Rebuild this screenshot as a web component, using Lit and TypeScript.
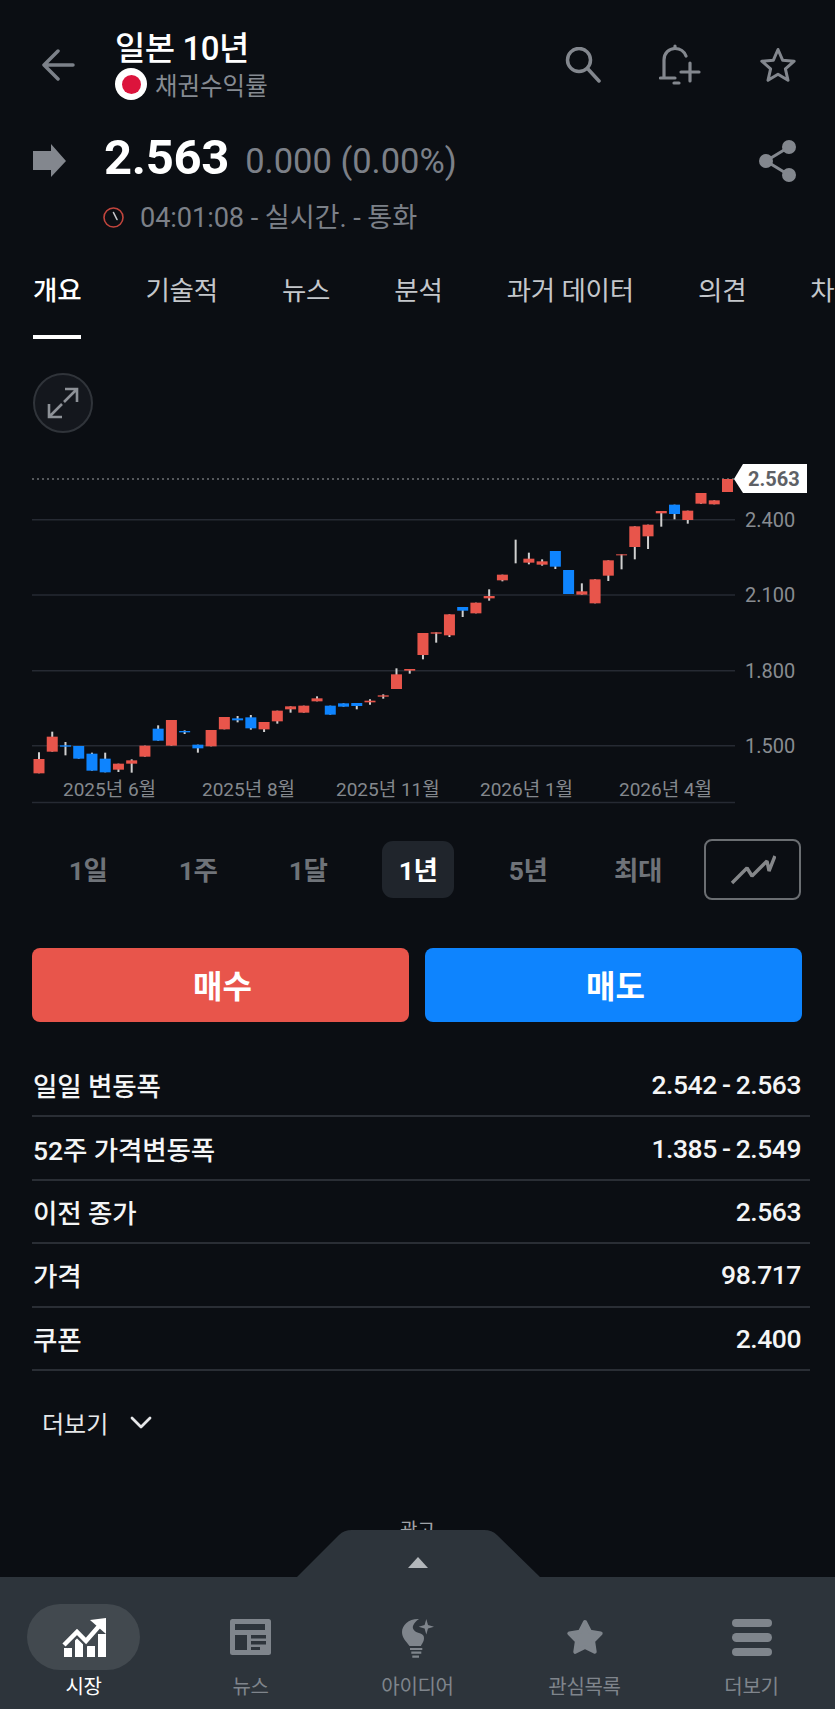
import { LitElement, html, svg, css } from 'lit';
import { customElement } from 'lit/decorators.js';

type Candle = [c: 'r' | 'b' | 'g', top: number, bottom: number, wickTop?: number, wickBottom?: number];

// measured on a 3x grid, relative to the chart's top edge
const CANDLES: Candle[] = [
    ['r', 927, 970, 907, 970], ['r', 860, 905, 845, 905], ['b', 886, 890, 876, 916], ['b', 888, 926],
    ['b', 911, 962, 908, 962], ['b', 926, 967, 908, 967], ['r', 941, 959, 941, 966], ['r', 931, 941, 928, 968],
    ['r', 887, 920], ['b', 836, 872, 826, 872], ['r', 810, 887], ['b', 843, 847, 841, 852],
    ['b', 884, 895, 884, 908], ['r', 840, 889], ['r', 801, 838], ['b', 805, 811, 798, 817],
    ['b', 802, 835, 795, 839], ['r', 816, 838, 816, 846], ['r', 782, 814, 782, 821], ['r', 769, 778, 769, 788],
    ['r', 767, 788], ['r', 745, 754, 739, 754], ['b', 767, 794], ['b', 760, 770],
    ['b', 759, 768, 759, 778], ['r', 752, 757, 748, 764], ['r', 736, 740, 733, 746], ['r', 673, 717, 655, 717],
    ['r', 657, 662, 657, 671], ['r', 549, 615, 549, 628], ['r', 547, 551, 547, 578], ['r', 493, 556, 493, 561],
    ['b', 471, 482, 471, 501], ['r', 458, 490], ['r', 438, 445, 418, 452], ['r', 374, 391, 374, 394],
    ['g', 314, 316, 269, 340], ['r', 326, 338, 308, 343], ['r', 334, 344, 328, 347], ['b', 303, 350, 303, 357],
    ['b', 360, 432], ['r', 424, 434, 400, 434], ['r', 388, 460], ['r', 331, 377, 331, 393],
    ['r', 313, 316, 313, 358], ['r', 229, 291, 229, 328], ['r', 224, 259, 224, 297], ['r', 183, 190, 183, 230],
    ['b', 164, 192, 164, 208], ['r', 182, 210, 182, 221], ['r', 129, 161], ['r', 151, 163], ['r', 87, 126],
];

const COLORS = { r: '#e8554b', b: '#0e84fe', g: '#9a9a9a' };

const TABS = ['개요', '기술적', '뉴스', '분석', '과거 데이터', '의견', '차'];
const RANGES = ['1일', '1주', '1달', '1년', '5년', '최대'];
const STATS = [
    ['일일 변동폭', '2.542 - 2.563'],
    ['52주 가격변동폭', '1.385 - 2.549'],
    ['이전 종가', '2.563'],
    ['가격', '98.717'],
    ['쿠폰', '2.400'],
];

function star(cx: number, cy: number, R: number, r: number) {
    const pts: string[] = [];
    for (let i = 0; i < 10; i++) {
        const a = (Math.PI / 5) * i - Math.PI / 2;
        const d = i % 2 ? r : R;
        pts.push(`${(cx + d * Math.cos(a)).toFixed(1)},${(cy + d * Math.sin(a)).toFixed(1)}`);
    }
    return pts.join(' ');
}

@customElement('app-root')
export class AppRoot extends LitElement {
    static styles = css`
        :host {
            display: flex;
            flex-direction: column;
            height: 1709px;
            background: #0b0e13;
            color: #fff;
            font-family: Roboto, 'Noto Sans CJK KR', sans-serif;
            overflow: hidden;
        }
        svg {
            display: block;
            flex: none;
        }
        .top {
            display: flex;
            align-items: center;
            height: 112px;
            padding: 0 38px 0 42px;
            box-sizing: border-box;
        }
        .back {
            margin-top: 18px;
        }
        .titles {
            margin-left: 39px;
            flex: 1;
            padding-top: 17px;
        }
        .title {
            font-size: 33px;
            line-height: 39px;
            font-weight: 500;
            letter-spacing: -0.5px;
            padding-top: 1px;
            margin-bottom: -1px;
        }
        .sub {
            display: flex;
            align-items: center;
            gap: 8px;
            height: 34px;
            font-size: 24.5px;
            color: #868b92;
        }
        .flag {
            width: 32px;
            height: 32px;
            border-radius: 50%;
            background: #fff;
            display: flex;
            align-items: center;
            justify-content: center;
        }
        .flag i {
            width: 19px;
            height: 19px;
            border-radius: 50%;
            background: #dc143c;
        }
        .top-icons {
            display: flex;
            align-items: center;
            gap: 58px;
            margin-top: 18px;
        }
        .quote {
            display: flex;
            align-items: center;
            height: 62px;
            margin-top: 17px;
            padding: 0 38px 0 33px;
        }
        .price {
            margin-left: 38px;
            padding-bottom: 5px;
            font-size: 49px;
            font-weight: 700;
            letter-spacing: -0.3px;
        }
        .change {
            margin-left: 16px;
            flex: 1;
            font-size: 34.5px;
            color: #7c8088;
            padding-top: 1px;
        }
        .share {
            margin-top: 2px;
        }
        .meta {
            display: flex;
            align-items: center;
            gap: 16px;
            height: 36px;
            margin-top: 8px;
            padding-left: 103px;
            font-size: 27.2px;
            letter-spacing: -0.1px;
            color: #7c8088;
        }
        .meta span {
            padding-bottom: 4px;
        }
        .tabs {
            display: flex;
            height: 73px;
            margin-top: 39px;
            padding-left: 33px;
            gap: 64px;
            white-space: nowrap;
            overflow: hidden;
        }
        .tab {
            font-size: 26.5px;
            line-height: 34px;
            letter-spacing: -0.2px;
            color: #c4c7cb;
        }
        .tab.on {
            color: #fff;
            font-weight: 500;
            height: 61px;
            border-bottom: 4px solid #fff;
        }
        .expand {
            width: 60px;
            height: 60px;
            margin: 26px 0 0 33px;
            box-sizing: border-box;
            border: 2px solid #30343a;
            border-radius: 50%;
            background: #14171d;
            display: flex;
            align-items: center;
            justify-content: center;
        }
        .chart {
            margin-top: 17px;
            font-family: Roboto, 'Noto Sans CJK KR', sans-serif;
        }
        .ranges {
            display: flex;
            align-items: center;
            height: 61px;
            margin-top: 29px;
            padding: 0 34px 0 33px;
        }
        .range {
            width: 110px;
            display: flex;
            justify-content: center;
        }
        .range span {
            width: 72px;
            height: 57px;
            box-sizing: border-box;
            padding-bottom: 3px;
            border-radius: 11px;
            display: flex;
            align-items: center;
            justify-content: center;
            font-size: 26.5px;
            font-weight: 700;
            letter-spacing: -0.5px;
            color: #6f7379;
        }
        .range.on span {
            background: #20252c;
            color: #fff;
        }
        .kind {
            margin-left: auto;
            width: 97px;
            height: 61px;
            box-sizing: border-box;
            border: 2px solid #6b6e72;
            border-radius: 8px;
            display: flex;
            align-items: center;
            justify-content: center;
        }
        .trade {
            display: grid;
            grid-template-columns: 1fr 1fr;
            gap: 16px;
            height: 74px;
            margin-top: 48px;
            padding: 0 33px 0 32px;
        }
        .trade div {
            box-sizing: border-box;
            padding: 0 0 3px 4px;
            border-radius: 8px;
            display: flex;
            align-items: center;
            justify-content: center;
            font-size: 32px;
            font-weight: 700;
        }
        .buy {
            background: #e8554b;
        }
        .sell {
            background: #0e84fe;
        }
        .stats {
            margin: 32px 25px 0 32px;
        }
        .stat {
            display: flex;
            align-items: center;
            justify-content: space-between;
            height: 61.4px;
            padding: 0 9px 0 1px;
            border-bottom: 2px solid #2a2e35;
            font-size: 26.5px;
            font-weight: 500;
            color: #f4f5f6;
        }
        .stat span:first-child {
            letter-spacing: -0.1px;
        }
        .stat span:last-child {
            letter-spacing: -0.45px;
            word-spacing: -1px;
        }
        .more {
            display: flex;
            align-items: center;
            gap: 22px;
            height: 40px;
            margin: 32px 0 0 42px;
            font-size: 24px;
            color: #e6e7e9;
        }
        .ad {
            flex: 1;
            min-height: 0;
            overflow: hidden;
            display: flex;
            justify-content: center;
            font-size: 19px;
            line-height: 24px;
            color: #a0a3a8;
            padding-top: 76px;
        }
        .sheet {
            flex: none;
        }
        .nav {
            display: grid;
            grid-template-columns: repeat(5, 167px);
            height: 132px;
            padding-top: 27px;
            box-sizing: border-box;
            background: #2d343b;
        }
        .item {
            display: flex;
            flex-direction: column;
            align-items: center;
            font-size: 20px;
            color: #7f858c;
        }
        .icon {
            width: 113px;
            height: 66px;
            border-radius: 33px;
            display: flex;
            align-items: center;
            justify-content: center;
        }
        .item.on {
            color: #fff;
        }
        .item.on .icon {
            background: #42494f;
        }
        .label {
            margin-top: 3px;
            line-height: 28px;
            letter-spacing: -0.3px;
        }
    `;

    _chart() {
        const gridY = [519.7, 595, 670.7, 745.7].map((y) => y - 450);
        const axis = ['2.400', '2.100', '1.800', '1.500'];
        const months = [
            [63, '2025년 6월'],
            [202, '2025년 8월'],
            [336, '2025년 11월'],
            [480, '2026년 1월'],
            [619, '2026년 4월'],
        ];
        return html`<svg class="chart" width="835" height="360" viewBox="0 0 835 360">
            <line x1="32" x2="735" y1="29" y2="29" stroke="#6f7276" stroke-width="1.5" stroke-dasharray="2 3"></line>
            ${gridY.map(
                (y, i) => svg`
                <line x1="32" x2="735" y1=${y} y2=${y} stroke="#262a33" stroke-width="1.5"></line>
                <text x="745" y=${y + 7} font-size="20" fill="#888c91">${axis[i]}</text>`
            )}
            <line x1="32" x2="735" y1="352.5" y2="352.5" stroke="#262a33" stroke-width="1.5"></line>
            ${months.map(
                ([x, t]) => svg`<text x=${x} y="346" font-size="19" fill="#84888d">${t}</text>`
            )}
            ${CANDLES.map(([c, top, bottom, wt, wb], i) => {
                const x = (117 + i * 39.72) / 3;
                return svg`
                <line x1=${x} x2=${x} y1=${(wt ?? top) / 3} y2=${(wb ?? bottom) / 3} stroke="#d0d0d0" stroke-width="2"></line>
                <rect x=${x - 5.5} y=${top / 3} width=${c === 'g' ? 0 : 11} height=${(bottom - top) / 3} fill=${COLORS[c]}></rect>`;
            })}
            <polygon points="734,29 743,14 807,14 807,43 743,43" fill="#fff"></polygon>
            <text x="748" y="36" font-size="20" font-weight="700" fill="#5e6166">2.563</text>
        </svg>`;
    }

    render() {
        return html`
            <div class="top">
                <svg class="back" width="34" height="34" viewBox="0 0 34 34" fill="none" stroke="#7c8189" stroke-width="3.5" stroke-linecap="round" stroke-linejoin="round">
                    <path d="M31 17H3M16 3 2 17l14 14"></path>
                </svg>
                <div class="titles">
                    <div class="title">일본 10년</div>
                    <div class="sub"><span class="flag"><i></i></span>채권수익률</div>
                </div>
                <div class="top-icons">
                    <svg width="36" height="36" viewBox="0 0 36 36" fill="none" stroke="#83878e" stroke-width="3.5" stroke-linecap="round">
                        <circle cx="14" cy="13" r="11.5"></circle>
                        <path d="M22.5 21.5 34 34"></path>
                    </svg>
                    <svg width="42" height="42" viewBox="0 0 42 42" fill="none" stroke="#83878e" stroke-width="3.2" stroke-linecap="round">
                        <path d="M1.5 34H16M5 33V16C5 9 10 4.5 16 4.5c5 0 9 2.5 11 7.500"></path>
                        <path d="M16 2v2M15 39h5M22 28h18M31 19v18"></path>
                    </svg>
                    <svg width="38" height="36" viewBox="0 0 38 36" fill="none" stroke="#83878e" stroke-width="3" stroke-linejoin="round">
                        <polygon points=${star(19, 19.500, 17, 7.800)}></polygon>
                    </svg>
                </div>
            </div>

            <div class="quote">
                <svg width="33" height="33" viewBox="0 0 33 33"><polygon points="0,7 18,7 18,0 33,17 18,33 18,26 0,26" fill="#83878e"></polygon></svg>
                <div class="price">2.563</div>
                <div class="change">0.000 (0.00%)</div>
                <svg class="share" width="38" height="42" viewBox="0 0 38 42" fill="#83878e" stroke="#83878e" stroke-width="3">
                    <path d="M30 7 7 21l23 14" fill="none"></path>
                    <circle cx="30" cy="7" r="5.500"></circle>
                    <circle cx="7" cy="21" r="5.500"></circle>
                    <circle cx="30" cy="35" r="5.500"></circle>
                </svg>
            </div>

            <div class="meta">
                <svg width="21" height="21" viewBox="0 0 21 21" fill="none" stroke-linecap="round">
                    <circle cx="10.500" cy="10.500" r="9.500" stroke="#c2453d" stroke-width="1.600"></circle>
                    <path d="M10.500 5.500 14 12.500" stroke="#c9cbce" stroke-width="1.600"></path>
                </svg>
                <span>04:01:08 - 실시간. - 통화</span>
            </div>

            <div class="tabs">
                ${TABS.map((t, i) => html`<div class="tab ${i === 0 ? 'on' : ''}">${t}</div>`)}
            </div>

            <div class="expand">
                <svg width="32" height="32" viewBox="0 0 32 32" fill="none" stroke="#8d9197" stroke-width="2.600">
                    <path d="M17 15 30 2M18 2h12v13M15 17 2 30M2 17v13h13"></path>
                </svg>
            </div>

            ${this._chart()}

            <div class="ranges">
                ${RANGES.map((r, i) => html`<div class="range ${i === 3 ? 'on' : ''}"><span>${r}</span></div>`)}
                <div class="kind">
                    <svg width="46" height="30" viewBox="0 0 46 30" fill="none" stroke="#85878a" stroke-width="3.400" stroke-linejoin="bevel">
                        <path d="M2 28 17 13l5 8 15-15 2 10 6-15"></path>
                    </svg>
                </div>
            </div>

            <div class="trade">
                <div class="buy">매수</div>
                <div class="sell">매도</div>
            </div>

            <div class="stats">
                ${STATS.map(([k, v]) => html`<div class="stat"><span>${k}</span><span>${v}</span></div>`)}
            </div>

            <div class="more">
                <span>더보기</span>
                <svg width="22" height="13" viewBox="0 0 22 13" fill="none" stroke="#e6e7e9" stroke-width="2.800" stroke-linecap="round" stroke-linejoin="round">
                    <path d="M2 2 11 11 20 2"></path>
                </svg>
            </div>

            <div class="ad"><span>광고</span></div>

            <div class="sheet">
                <svg width="835" height="47" viewBox="0 0 835 47">
                    <path d="M297 47 339 5Q344 0 352 0H484Q492 0 497 5L540 47Z" fill="#2d343b"></path>
                    <polygon points="418,27 428,38 408,38" fill="#b3b7bb"></polygon>
                </svg>
                <div class="nav">
                    <div class="item on">
                        <div class="icon">
                            <svg width="44" height="39" viewBox="0 0 44 39">
                                <path d="M2 39v-9h8v9ZM13 39V20h8v19ZM25 39V28h8v11ZM36 39V16h8v23Z" fill="#fff"></path>
                                <path d="M2 27 15 14l9 9L40 5" fill="none" stroke="#42494f" stroke-width="9"></path>
                                <path d="M2 27 15 14l9 9L38 7" fill="none" stroke="#fff" stroke-width="4.500"></path>
                                <polygon points="28,2 44,0 44,16" fill="#fff"></polygon>
                            </svg>
                        </div>
                        <span class="label">시장</span>
                    </div>
                    <div class="item">
                        <div class="icon">
                            <svg width="41" height="36" viewBox="0 0 41 36">
                                <rect width="41" height="36" rx="2.500" fill="#7f858c"></rect>
                                <path d="M5 5h30v6H5ZM5 16h12v15H5ZM21 16h15v3.500H21ZM21 22h15v3.500H21ZM21 28h9v3H21Z" fill="#2d343b"></path>
                            </svg>
                        </div>
                        <span class="label">뉴스</span>
                    </div>
                    <div class="item">
                        <div class="icon">
                            <svg width="34" height="41" viewBox="0 0 34 41" fill="#7f858c">
                                <path d="M18 2C8 1.500 1 8 1 15c0 6 4 9 7.500 14H20c.5-2 3-4 3-8 0-3-2-4-5-5-4-1-7-4-6-7 1-3 3-5 6-7Z"></path>
                                <polygon points="25.300,2 27,8 33,9.700 27,11.400 25.300,17.400 23.600,11.400 17.600,9.700 23.600,8"></polygon>
                                <path d="M9 32h12.300M10.300 35.700h10M11.300 39.700H18" stroke="#7f858c" stroke-width="2.200" fill="none"></path>
                            </svg>
                        </div>
                        <span class="label">아이디어</span>
                    </div>
                    <div class="item">
                        <div class="icon">
                            <svg width="38" height="36" viewBox="0 0 38 36">
                                <polygon points=${star(19, 19.500, 16.500, 8.500)} fill="#7f858c" stroke="#7f858c" stroke-width="4" stroke-linejoin="round"></polygon>
                            </svg>
                        </div>
                        <span class="label">관심목록</span>
                    </div>
                    <div class="item">
                        <div class="icon">
                            <svg width="40" height="37" viewBox="0 0 40 37" fill="#7f858c">
                                <rect width="40" height="8" rx="4"></rect>
                                <rect y="14" width="40" height="9" rx="4.500"></rect>
                                <rect y="29" width="40" height="8" rx="4"></rect>
                            </svg>
                        </div>
                        <span class="label">더보기</span>
                    </div>
                </div>
            </div>
        `;
    }
}
